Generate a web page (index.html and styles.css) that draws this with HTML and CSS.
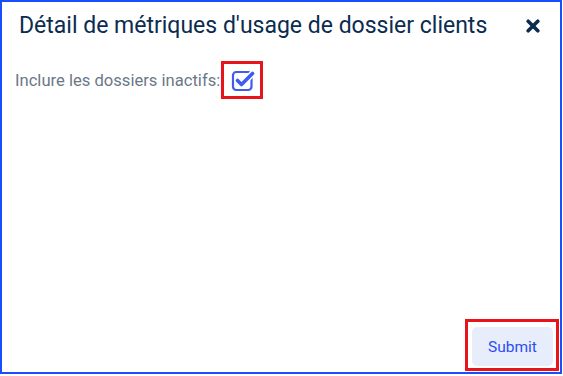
FILE: index.html
```html
<!DOCTYPE html>
<html lang="fr">
<head>
<meta charset="utf-8">
<title>Détail de métriques</title>
<link rel="stylesheet" href="styles.css">
</head>
<body>
<div class="modal">
  <div class="modal-header">
    <h1 class="modal-title">Détail de métriques d'usage de dossier clients</h1>
    <button class="close-btn" aria-label="Fermer">
      <svg width="14" height="14" viewBox="0 0 14 14"><path d="M2.2 2.2 L11.8 11.8 M11.8 2.2 L2.2 11.8" stroke="#0b2c4f" stroke-width="3.6" stroke-linecap="round"/></svg>
    </button>
  </div>
  <div class="modal-body">
    <div class="field-row">
      <span class="field-label">Inclure les dossiers inactifs:</span>
      <span class="highlight hl-check">
        <svg class="check-icon" width="24" height="24" viewBox="0 0 24 24">
          <rect x="2" y="4" width="18.5" height="18" rx="3.2" fill="none" stroke="#3f5cf2" stroke-width="2.2"/>
          <path d="M6.5 12.5 L10.5 16.5 L21.5 5.5" fill="none" stroke="#fff" stroke-width="6.5" stroke-linecap="round" stroke-linejoin="round"/>
          <path d="M6.5 12.5 L10.5 16.5 L21.5 5.5" fill="none" stroke="#3f5cf2" stroke-width="3.6" stroke-linecap="round" stroke-linejoin="round"/>
        </svg>
      </span>
    </div>
  </div>
  <div class="modal-footer">
    <span class="highlight hl-submit">
      <button class="submit-btn">Submit</button>
    </span>
  </div>
</div>
</body>
</html>
```

FILE: styles.css
```css
html, body {
  margin: 0;
  padding: 0;
  background: #ffffff;
}
body {
  font-family: Roboto, "Liberation Sans", sans-serif;
  width: 563px;
  height: 376px;
  overflow: hidden;
}
.modal {
  box-sizing: border-box;
  width: 562px;
  height: 374px;
  border: 2px solid #1a4dff;
  display: flex;
  flex-direction: column;
  background: #fff;
}
.modal-header {
  display: flex;
  align-items: center;
  justify-content: space-between;
  padding: 9px 20px 0 17px;
  height: 30px;
}
.modal-title {
  margin: 0;
  font-size: 23px;
  font-weight: 400;
  color: #0b2c4f;
  line-height: 30px;
}
.close-btn {
  border: none;
  background: none;
  padding: 0;
  width: 14px;
  height: 14px;
  display: flex;
  cursor: pointer;
}
.modal-body {
  padding: 20px 0 0 13px;
}
.field-row {
  display: flex;
  align-items: center;
  gap: 1px;
}
.field-label {
  font-size: 16.6px;
  color: #6b7888;
}
.highlight {
  border: 3px solid #e8141c;
  display: inline-flex;
}
.hl-check {
  padding: 4px 5px 4px 7px;
}
.check-icon {
  display: block;
}
.modal-footer {
  margin-top: auto;
  display: flex;
  justify-content: flex-end;
  padding: 0 1px 1px 0;
}
.hl-submit {
  padding: 5px 3px 2px 4px;
}
.submit-btn {
  width: 81px;
  height: 39px;
  border: none;
  border-radius: 5px;
  background: #e8edfc;
  color: #2b4ef2;
  font-family: Roboto, "Liberation Sans", sans-serif;
  font-size: 15.5px;
  font-weight: 400;
  padding: 0;
}
```
